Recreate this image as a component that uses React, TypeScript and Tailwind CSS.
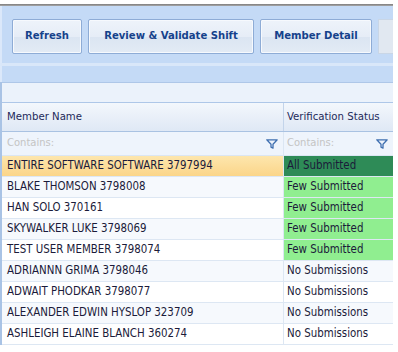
import React from "react";

const rows: { name: string; status: string; kind: "all" | "few" | "none" }[] = [
  { name: "ENTIRE SOFTWARE SOFTWARE 3797994", status: "All Submitted", kind: "all" },
  { name: "BLAKE THOMSON 3798008", status: "Few Submitted", kind: "few" },
  { name: "HAN SOLO 370161", status: "Few Submitted", kind: "few" },
  { name: "SKYWALKER LUKE 3798069", status: "Few Submitted", kind: "few" },
  { name: "TEST USER MEMBER 3798074", status: "Few Submitted", kind: "few" },
  { name: "ADRIANNN GRIMA 3798046", status: "No Submissions", kind: "none" },
  { name: "ADWAIT PHODKAR 3798077", status: "No Submissions", kind: "none" },
  { name: "ALEXANDER EDWIN HYSLOP 323709", status: "No Submissions", kind: "none" },
  { name: "ASHLEIGH ELAINE BLANCH 360274", status: "No Submissions", kind: "none" },
];

const cond = { fontFamily: '"DejaVu Sans Condensed", "DejaVu Sans", sans-serif' };

function Funnel() {
  return (
    <svg width="12" height="10" viewBox="0 0 12 10" className="shrink-0">
      <path d="M0.8 0.8 H11.2 L7 5.2 V9.2 L5 8.2 V5.2 Z" fill="none" stroke="#3f6fb0" strokeWidth="1.3" strokeLinejoin="round" />
    </svg>
  );
}

function Btn({ label, w }: { label: string; w: string }) {
  return (
    <div
      className={`${w} h-[35px] shrink-0 flex items-center justify-center border border-[#8eacd6] rounded-[2px] bg-[linear-gradient(#eef3fa_0%,#e6edf7_50%,#dbe5f2_51%,#e3ebf5_100%)] shadow-[inset_0_0_0_1px_#f6f9fd] text-[#15428b] text-[11.2px] font-bold`}
    >
      {label}
    </div>
  );
}

export default function App() {
  return (
    <div className="w-[398px] h-[352px] bg-white overflow-hidden text-[#1b1b3a]" style={cond}>
      <div className="h-[4px]" />
      <div className="w-[393px] h-[2px] bg-[linear-gradient(#7d7d7d,#a8a8a8)]" />
      <div className="w-[393px] h-[57px] bg-[#c4daf6] border-l-2 border-[#dbe8fa] flex items-start pt-[13px] pl-[10px] gap-[6px] overflow-hidden">
        <Btn label="Refresh" w="w-[70px]" />
        <Btn label="Review & Validate Shift" w="w-[166px]" />
        <Btn label="Member Detail" w="w-[112px]" />
        <div className="w-[30px] h-[35px] shrink-0 border border-[#c9d6e6] bg-[#e1e8f1]" />
      </div>
      <div className="w-[393px] h-[3px] bg-[#d9e7f9]" />
      <div className="w-[393px] h-[16px] bg-[#c4daf6] border-l-2 border-[#dbe8fa]" />
      <div className="w-[393px] ml-0 border-l-2 border-[#a9c3e5]">
        <div className="h-[21px] bg-[#ebf2fb] border-t border-b border-[#aec7e8]" />
        <div className="flex h-[29px] bg-[linear-gradient(#f3f7fc,#dfe8f5)] border-b border-[#a9c2e2] text-[11.3px] text-[#1e2a5a]">
          <div className="w-[282px] flex items-center pl-[5px] border-r border-[#c3d4ea]">Member Name</div>
          <div className="flex-1 flex items-center pl-[3px]">Verification Status</div>
        </div>
        <div className="flex h-[24px] bg-[#eef4fc] border-b border-[#dbe6f3] text-[11.1px] text-[#c4c4c4]">
          <div className="w-[282px] flex items-center pl-[5px] pr-[5px] justify-between border-r border-[#dbe6f3]">
            <span>Contains:</span>
            <Funnel />
          </div>
          <div className="flex-1 flex items-center pl-[3px] pr-[5px] justify-between">
            <span>Contains:</span>
            <Funnel />
          </div>
        </div>
        {rows.map((r, i) => {
          const rowBg =
            r.kind === "all"
              ? "bg-[linear-gradient(#fde6ad,#fbd589)]"
              : i % 2 === 0
              ? "bg-white"
              : "bg-[#f6f9fd]";
          const statusBg =
            r.kind === "all" ? "bg-[#2e8b57]" : r.kind === "few" ? "bg-[#90ee90]" : "";
          return (
            <div key={r.name} className={`flex h-[21px] border-b border-[#dde7f3] text-[11.4px] ${rowBg}`}>
              <div className="w-[282px] flex items-center pl-[5px] border-r border-[#dde7f3] whitespace-nowrap overflow-hidden">
                {r.name}
              </div>
              <div className={`flex-1 flex items-center pl-[3px] whitespace-nowrap ${statusBg}`}>{r.status}</div>
            </div>
          );
        })}
      </div>
    </div>
  );
}
